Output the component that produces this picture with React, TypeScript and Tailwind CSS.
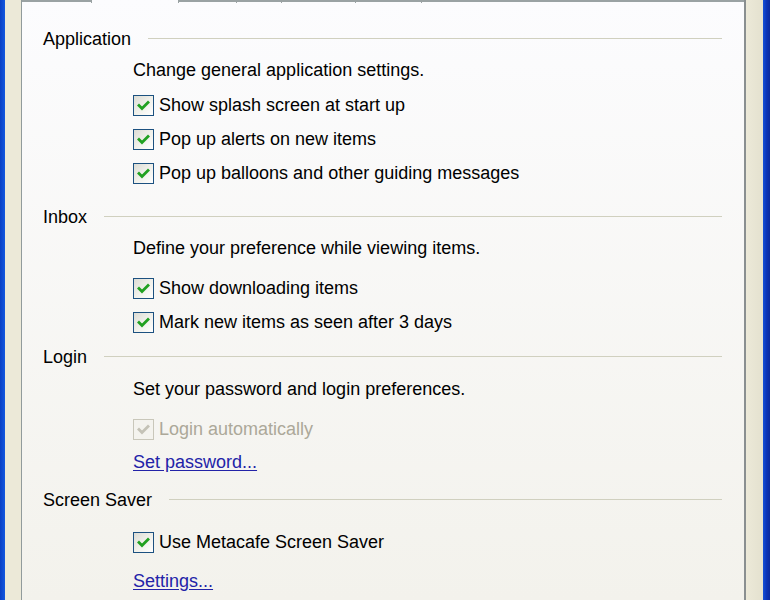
import React from "react";

type CheckProps = { label: string; checked?: boolean; disabled?: boolean; className?: string };

const Check = ({ label, disabled, className }: CheckProps) => (
  <div className={`flex items-center h-[34px] pl-[111px] ${className ?? ""}`}>
    <span
      className={`w-[21px] h-[21px] border flex items-center justify-center ${
        disabled
          ? "border-[#c9c7ba] bg-[#f4f3ee]"
          : "border-[#1c5180] bg-gradient-to-br from-[#dcdcd5] via-[#f0f0ea] to-white"
      }`}
    >
      <svg width="15" height="15" viewBox="0 0 15 15">
        <path
          d="M3 7.5 L6 10.5 L12 4.5"
          fill="none"
          stroke={disabled ? "#c4c2b6" : "#21a121"}
          strokeWidth="2.8"
          strokeLinecap="square"
        />
      </svg>
    </span>
    <span className={`ml-[5px] ${disabled ? "text-[#aca899]" : "text-black"}`}>{label}</span>
  </div>
);

const Heading = ({ title, className }: { title: string; className?: string }) => (
  <div className={`flex items-center h-[22px] pl-[21px] pr-[22px] ${className ?? ""}`}>
    <span className="text-black">{title}</span>
    <span className="flex-1 ml-[17px] h-[2px] border-t border-[#d0d0bf] border-b-white" />
  </div>
);

const Line = ({ children, className }: { children: React.ReactNode; className?: string }) => (
  <div className={`flex items-center h-[22px] pl-[111px] ${className ?? ""}`}>{children}</div>
);

const Link = ({ children, className }: { children: React.ReactNode; className?: string }) => (
  <div className={`flex items-center h-[22px] pl-[111px] ${className ?? ""}`}>
    <span className="text-[#2323a8] underline underline-offset-2">{children}</span>
  </div>
);

export default function App() {
  return (
    <div
      className="w-[770px] h-[600px] flex overflow-hidden text-[18px] leading-[22px]"
      style={{ fontFamily: '"Liberation Sans", Arial, sans-serif' }}
    >
      <div className="w-[5px] bg-gradient-to-r from-[#0a3fc4] to-[#1458e0]" />
      <div className="w-[16px] bg-[#ece9d8]" />
      <div className="flex-1 flex flex-col border-l border-r-2 border-[#919b9c] border-r-[#8a8f90] bg-gradient-to-b from-[#fcfcfe] to-[#f3f2ec]">
        <div className="flex h-[3px]">
          <div className="w-[70px] border-t-2 border-r border-[#9aa2a3]" />
          <div className="w-[86px]" />
          <div className="w-[58px] border-t-2 border-l border-[#9aa2a3]" />
          <div className="w-[45px] border-t-2 border-l border-[#9aa2a3]" />
          <div className="w-[74px] border-t-2 border-l border-[#9aa2a3]" />
          <div className="w-[66px] border-t-2 border-l border-[#9aa2a3]" />
          <div className="flex-1 border-t-2 border-l border-[#9aa2a3]" />
        </div>

        <Heading title="Application" className="mt-[25px]" />
        <Line className="mt-[9px]">Change general application settings.</Line>
        <Check label="Show splash screen at start up" className="mt-[7px]" />
        <Check label="Pop up alerts on new items" />
        <Check label="Pop up balloons and other guiding messages" />

        <Heading title="Inbox" className="mt-[16px]" />
        <Line className="mt-[9px]">Define your preference while viewing items.</Line>
        <Check label="Show downloading items" className="mt-[12px]" />
        <Check label="Mark new items as seen after 3 days" />

        <Heading title="Login" className="mt-[7px]" />
        <Line className="mt-[10px]">Set your password and login preferences.</Line>
        <Check label="Login automatically" disabled className="mt-[12px]" />
        <Link className="mt-[5px]">Set password...</Link>

        <Heading title="Screen Saver" className="mt-[16px]" />
        <Check label="Use Metacafe Screen Saver" className="mt-[14px]" />
        <Link className="mt-[11px]">Settings...</Link>
      </div>
      <div className="w-[17px] bg-gradient-to-r from-[#ece9d8] to-[#e4e1cf]" />
      <div className="w-[7px] bg-gradient-to-r from-[#1450d8] via-[#0a34b8] to-[#0a2a9c]" />
    </div>
  );
}
